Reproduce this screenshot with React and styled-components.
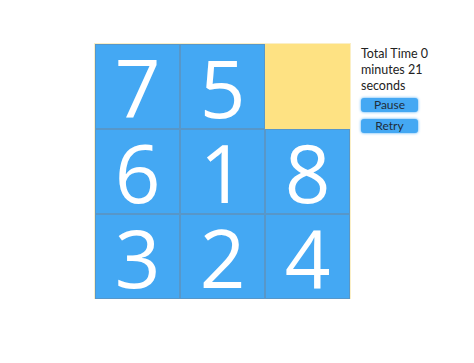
import React from "react";
import styled, { createGlobalStyle } from "styled-components";

const Global = createGlobalStyle`
  html, body { margin: 0; padding: 0; background: #fff; }
  body { font-family: "Lato", "Open Sans", sans-serif; }
`;

const Page = styled.div`
  display: flex;
  align-items: flex-start;
  gap: 11px;
  padding: 44px 0 0 95px;
`;

const Board = styled.div`
  display: grid;
  grid-template-columns: repeat(3, 85px);
  grid-template-rows: repeat(3, 85px);
  outline: 1px solid #fbefc6;
`;

const Tile = styled.div`
  box-sizing: border-box;
  background: ${(p) => (p.$empty ? "#fee283" : "#44a8f3")};
  border: ${(p) => (p.$empty ? "none" : "1px solid rgba(110, 130, 150, 0.45)")};
  display: flex;
  align-items: center;
  justify-content: center;
  color: #fff;
  font-family: "Open Sans", "Lato", sans-serif;
  font-size: 80px;
  font-weight: 500;
  line-height: 64px;
`;

const Side = styled.div`
  display: flex;
  flex-direction: column;
  width: 80px;
`;

const Info = styled.div`
  font-size: 12.5px;
  line-height: 16px;
  color: #222;
  margin-top: 2px;
`;

const Button = styled.button`
  width: 57px;
  height: 14px;
  padding: 0;
  border: none;
  border-radius: 3px;
  background: #44a8f3;
  box-shadow: 0 0 3px #44a8f3;
  color: #1f2d3a;
  font-family: "Lato", sans-serif;
  font-size: 12px;
  line-height: 14px;
  margin-top: ${(p) => p.$mt}px;
  cursor: pointer;
`;

const tiles = [7, 5, null, 6, 1, 8, 3, 2, 4];

export default function App() {
  return (
    <>
      <Global />
      <Page>
        <Board>
          {tiles.map((t, i) => (
            <Tile key={i} $empty={t === null}>
              {t}
            </Tile>
          ))}
        </Board>
        <Side>
          <Info>Total Time 0 minutes 21 seconds</Info>
          <Button $mt={4}>Pause</Button>
          <Button $mt={7}>Retry</Button>
        </Side>
      </Page>
    </>
  );
}
